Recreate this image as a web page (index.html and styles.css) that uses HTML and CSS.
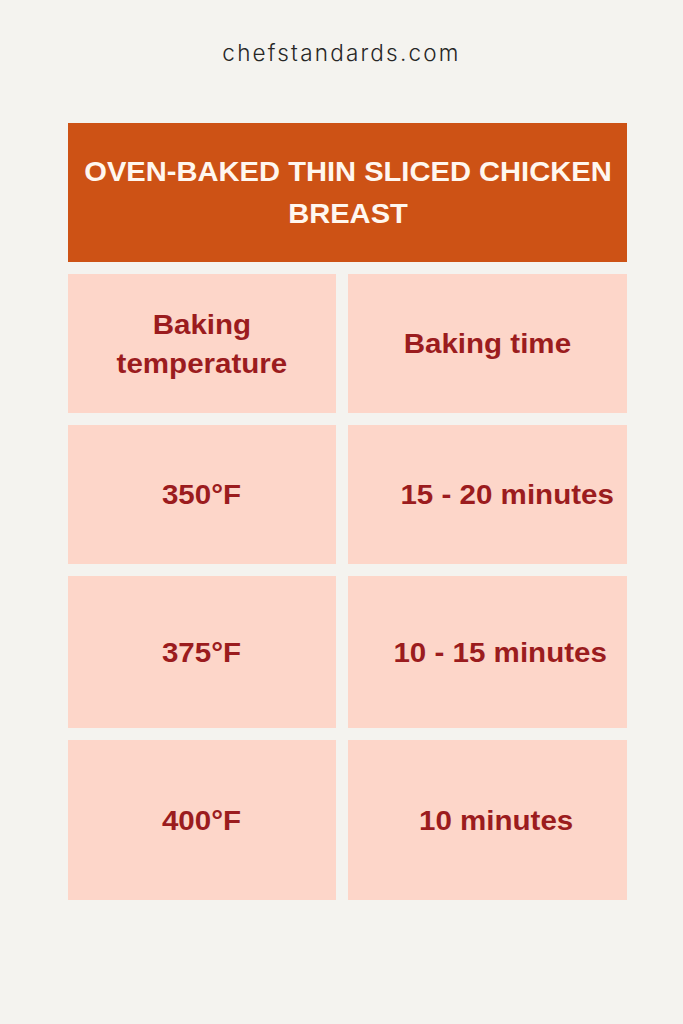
FILE: index.html
```html
<!DOCTYPE html>
<html lang="en">
<head>
<meta charset="utf-8">
<title>Oven-baked thin sliced chicken breast</title>
<link rel="stylesheet" href="styles.css">
</head>
<body>
  <div class="site">chefstandards.com</div>
  <main class="chart">
    <h1 class="chart-title"><span class="chart-title-text">OVEN-BAKED THIN SLICED CHICKEN BREAST</span></h1>
    <div class="grid">
      <div class="cell"><span class="cell-text">Baking<br>temperature</span></div>
      <div class="cell"><span class="cell-text">Baking time</span></div>
      <div class="cell"><span class="cell-text">350°F</span></div>
      <div class="cell cell--shift-lg"><span class="cell-text">15 - 20 minutes</span></div>
      <div class="cell"><span class="cell-text">375°F</span></div>
      <div class="cell cell--shift-md"><span class="cell-text">10 - 15 minutes</span></div>
      <div class="cell"><span class="cell-text">400°F</span></div>
      <div class="cell cell--shift-sm"><span class="cell-text">10 minutes</span></div>
    </div>
  </main>
</body>
</html>
```
FILE: styles.css
```css
html, body {
  margin: 0;
  padding: 0;
}

body {
  background: #f4f3ef;
  width: 683px;
  min-height: 1024px;
}

.site {
  padding-top: 40px;
  text-align: center;
  font-family: Inter, "Open Sans", sans-serif;
  font-weight: 300;
  font-size: 22.5px;
  line-height: 26px;
  letter-spacing: 2.2px;
  color: #262626;
}

.chart {
  margin: 57px 0 0 68px;
  width: 559px;
}

.chart-title {
  margin: 0;
  height: 139px;
  box-sizing: border-box;
  display: flex;
  align-items: center;
  justify-content: center;
  text-align: center;
  background: #cd5215;
  color: #fff7ef;
  font-family: "Liberation Sans", Arial, sans-serif;
  font-weight: 700;
  font-size: 28px;
  line-height: 41.5px;
}

.chart-title-text {
  display: block;
  max-width: 520px;
  transform: scaleX(1.04);
  transform-origin: center;
}

.grid {
  margin-top: 12px;
  display: grid;
  grid-template-columns: 268px 279px;
  grid-template-rows: 139px 139px 152px 160px;
  column-gap: 12px;
  row-gap: 12px;
}

.cell {
  background: #fdd6c9;
  display: flex;
  align-items: center;
  justify-content: center;
  text-align: center;
  color: #9b1c1e;
  font-family: "Liberation Sans", Arial, sans-serif;
  font-weight: 700;
  font-size: 28px;
  line-height: 39px;
}

.cell-text {
  display: block;
  transform: scaleX(1.055);
  transform-origin: center;
}

.cell--shift-lg {
  padding-left: 39px;
}

.cell--shift-md {
  padding-left: 26px;
}

.cell--shift-sm {
  padding-left: 17px;
}
```
